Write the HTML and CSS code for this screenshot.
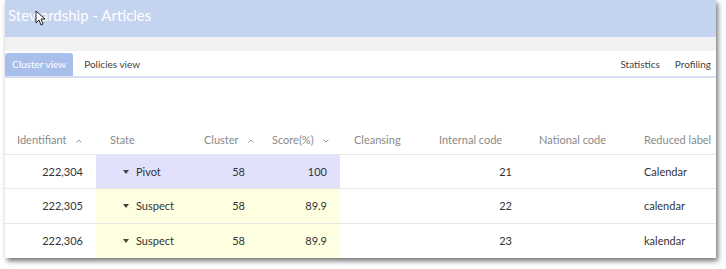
FILE: index.html
```html
<!DOCTYPE html>
<html>
<head>
  <meta charset="utf-8">
  <link rel="stylesheet" href="styles.css">
</head>
<body>
  <div class="window">
    <header class="title-bar">
      <h1>Stewardship - Articles</h1>
      <svg class="cursor" width="11" height="17" viewBox="0 0 11 17">
        <path d="M1 1 L1 13 L4 10 L6 15 L8 14 L6 9 L10 9 Z" fill="#fff" stroke="#222" stroke-width="1"/>
      </svg>
    </header>
    <div class="band"></div>

    <nav class="tabs">
      <div class="tabs-left">
        <span class="tab active">Cluster view</span>
        <span class="tab">Policies view</span>
      </div>
      <div class="tabs-right">
        <span class="tab">Statistics</span>
        <span class="tab">Profiling</span>
      </div>
    </nav>

    <table class="grid">
      <colgroup>
        <col class="c-id"><col class="c-state"><col class="c-cluster"><col class="c-score">
        <col class="c-clean"><col class="c-internal"><col class="c-national"><col class="c-label">
      </colgroup>
      <thead>
        <tr>
          <th>Identifiant <svg class="sort" width="6" height="4" viewBox="0 0 6 4"><path d="M0.5 3.5 L3 1 L5.5 3.5" fill="none" stroke="#999" stroke-width="1"/></svg></th>
          <th>State</th>
          <th class="num">Cluster <svg class="sort" width="6" height="4" viewBox="0 0 6 4"><path d="M0.5 3.5 L3 1 L5.5 3.5" fill="none" stroke="#999" stroke-width="1"/></svg></th>
          <th class="num">Score(%) <svg class="sort" width="6" height="4" viewBox="0 0 6 4"><path d="M0.5 0.5 L3 3 L5.5 0.5" fill="none" stroke="#999" stroke-width="1"/></svg></th>
          <th>Cleansing</th>
          <th>Internal code</th>
          <th>National code</th>
          <th>Reduced label</th>
        </tr>
      </thead>
      <tbody>
        <tr class="pivot">
          <td class="num">222,304</td>
          <td class="hl state"><span class="caret"></span>Pivot</td>
          <td class="hl num">58</td>
          <td class="hl num">100</td>
          <td></td>
          <td class="num">21</td>
          <td></td>
          <td>Calendar</td>
        </tr>
        <tr class="suspect">
          <td class="num">222,305</td>
          <td class="hl state"><span class="caret"></span>Suspect</td>
          <td class="hl num">58</td>
          <td class="hl num">89.9</td>
          <td></td>
          <td class="num">22</td>
          <td></td>
          <td>calendar</td>
        </tr>
        <tr class="suspect">
          <td class="num">222,306</td>
          <td class="hl state"><span class="caret"></span>Suspect</td>
          <td class="hl num">58</td>
          <td class="hl num">89.9</td>
          <td></td>
          <td class="num">23</td>
          <td></td>
          <td>kalendar</td>
        </tr>
      </tbody>
    </table>
  </div>
</body>
</html>
```

FILE: styles.css
```css
* {
  box-sizing: border-box;
  margin: 0;
  padding: 0;
  font-family: "Lato", sans-serif;
}

body {
  background: #fff;
  width: 726px;
  height: 269px;
  overflow: hidden;
}

.window {
  margin-left: 5px;
  width: 711px;
  height: 258px;
  background: #fff;
  box-shadow: 2px 3px 5px rgba(0, 0, 0, 0.55);
  overflow: hidden;
}

/* title */
.title-bar {
  position: relative;
  height: 37px;
  background: #c4d3ef;
  padding: 4px 3px;
}
.title-bar h1 {
  color: #fff;
  font-size: 15px;
  font-weight: 400;
  line-height: 22px;
}
.cursor {
  position: absolute;
  left: 30px;
  top: 10px;
}

.band {
  height: 14px;
  background: #f1f1f1;
}

/* tabs */
.tabs {
  height: 27px;
  display: flex;
  justify-content: space-between;
  align-items: flex-end;
  border-bottom: 2px solid #d6e0f2;
  font-size: 10px;
  color: #444;
}
.tabs-left,
.tabs-right {
  display: flex;
  align-items: flex-end;
}
.tab {
  height: 23px;
  line-height: 23px;
  padding: 0 7px;
}
.tabs-left .tab {
  margin-right: 4px;
}
.tab.active {
  background: #a8bfeb;
  color: #fff;
  border-radius: 3px 3px 0 0;
}
.tabs-right .tab {
  padding: 0 5px 0 10px;
}

/* table */
.grid {
  margin-top: 48px;
  width: 100%;
  border-collapse: collapse;
  table-layout: fixed;
  font-size: 11px;
  color: #333;
}
.c-id { width: 91px; }
.c-state { width: 94px; }
.c-cluster { width: 68px; }
.c-score { width: 82px; }
.c-clean { width: 85px; }
.c-internal { width: 100px; }
.c-national { width: 105px; }
.c-label { width: 86px; }

.grid th {
  height: 28px;
  font-weight: 400;
  color: #8a8a8a;
  text-align: left;
  padding: 0 13px 0 14px;
  white-space: nowrap;
}
.grid th:first-child {
  padding-left: 12px;
}
.grid th.num {
  text-align: right;
}
.sort {
  margin-left: 7px;
  vertical-align: middle;
}

.grid td {
  height: 34.5px;
  padding: 0 13px 0 14px;
  border-top: 1px solid #e6e6e6;
  white-space: nowrap;
}
.grid td.num {
  text-align: right;
}
.pivot .hl {
  background: #e1e1fb;
}
.suspect .hl {
  background: #fefee1;
}
.grid td.state {
  padding-left: 27px;
}
.caret {
  display: inline-block;
  width: 0;
  height: 0;
  margin-right: 7px;
  vertical-align: 2px;
  border-left: 3.5px solid transparent;
  border-right: 3.5px solid transparent;
  border-top: 4px solid #444;
}
```
